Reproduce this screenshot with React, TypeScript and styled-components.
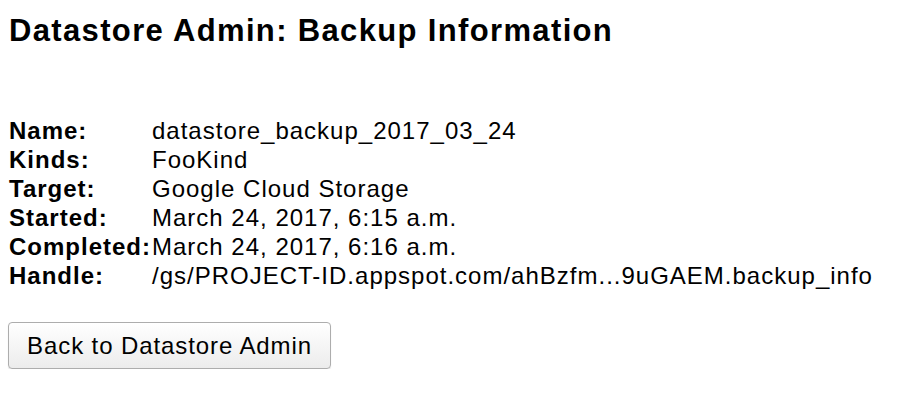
import React from "react";
import styled, { createGlobalStyle } from "styled-components";

const Global = createGlobalStyle`
  html, body { margin: 0; padding: 0; background: #ffffff; }
  body { font-family: "Liberation Sans", Arial, sans-serif; color: #000; }
`;

const Page = styled.div`
  padding: 15px 8px 0 8px;
  display: flex;
  flex-direction: column;
  align-items: flex-start;
`;

const Title = styled.h1`
  margin: 0;
  font-size: 31px;
  line-height: 32px;
  font-weight: bold;
  letter-spacing: 1.35px;
  padding-left: 1px;
`;

const InfoTable = styled.table`
  margin-top: 69px;
  border-collapse: collapse;
  font-size: 24px;
  line-height: 29px;
  letter-spacing: 1px;
`;

const Label = styled.td`
  font-weight: bold;
  padding: 0 0 0 1px;
  white-space: nowrap;
  vertical-align: top;
`;

const Value = styled.td`
  padding: 0 0 0 1px;
  white-space: nowrap;
  vertical-align: top;
`;

const BackButton = styled.button`
  margin-top: 32px;
  width: 323px;
  height: 47px;
  font-family: "Liberation Sans", Arial, sans-serif;
  font-size: 24px;
  letter-spacing: 0.9px;
  color: #000;
  border: 1px solid #adadad;
  border-radius: 4px;
  background: linear-gradient(#ffffff, #ececec);
  box-shadow: 0 1px 1px rgba(0, 0, 0, 0.12);
  padding: 0;
  cursor: pointer;
`;

const rows: [string, string][] = [
  ["Name:", "datastore_backup_2017_03_24"],
  ["Kinds:", "FooKind"],
  ["Target:", "Google Cloud Storage"],
  ["Started:", "March 24, 2017, 6:15 a.m."],
  ["Completed:", "March 24, 2017, 6:16 a.m."],
  ["Handle:", "/gs/PROJECT-ID.appspot.com/ahBzfm...9uGAEM.backup_info"],
];

export default function App() {
  return (
    <>
      <Global />
      <Page>
        <Title>Datastore Admin: Backup Information</Title>
        <InfoTable>
          <tbody>
            {rows.map(([k, v]) => (
              <tr key={k}>
                <Label>{k}</Label>
                <Value>{v}</Value>
              </tr>
            ))}
          </tbody>
        </InfoTable>
        <BackButton>Back to Datastore Admin</BackButton>
      </Page>
    </>
  );
}
